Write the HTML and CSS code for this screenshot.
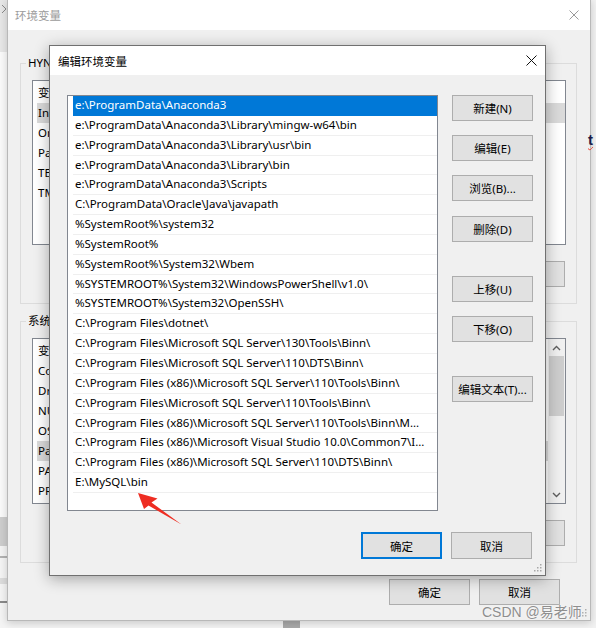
FILE: index.html
```html
<!DOCTYPE html>
<html lang="zh-CN">
<head>
<meta charset="utf-8">
<title>编辑环境变量</title>
<link rel="stylesheet" href="styles.css">
</head>
<body>
<div class="desk">
  <div class="side-left">
    <svg class="side-chev" width="6" height="10" viewBox="0 0 6 10"><path d="M1 1 L5 5 L1 9" fill="none" stroke="#8a8a8a" stroke-width="1"/></svg>
  </div>
  <div class="side-right"></div>
  <div class="shelf-bottom"></div>

  <div class="win bgwin">
    <div class="titlebar">
      <span class="title inactive">环境变量</span>
      <svg class="xbtn" width="10" height="10" viewBox="0 0 10 10"><path d="M0.5 0.5 L9.5 9.5 M9.5 0.5 L0.5 9.5" stroke="#9a9a9a" stroke-width="1"/></svg>
    </div>
    <div class="bgbody">
      <fieldset class="group">
        <legend>HYN 的用户变量(U)</legend>
        <div class="lv">
          <div class="lv-content">
            <div class="lv-head"><span class="col1">变量</span><span>值</span></div>
            <div class="lv-row sel">IntelliJ IDEA</div>
            <div class="lv-row">OneDrive</div>
            <div class="lv-row">Path</div>
            <div class="lv-row">TEMP</div>
            <div class="lv-row">TMP</div>
          </div>
        </div>
        <div class="btnrow">
          <button class="btn">新建(N)...</button>
          <button class="btn">编辑(E)...</button>
          <button class="btn">删除(D)</button>
        </div>
      </fieldset>
      <fieldset class="group group2">
        <legend>系统变量(S)</legend>
        <div class="lv lv2">
          <div class="lv-content">
            <div class="lv-head"><span class="col1">变量</span><span>值</span></div>
            <div class="lv-row">ComSpec</div>
            <div class="lv-row">DriverData</div>
            <div class="lv-row">NUMBER_OF_PROCESSORS</div>
            <div class="lv-row">OS</div>
            <div class="lv-row sel">Path</div>
            <div class="lv-row">PATHEXT</div>
            <div class="lv-row">PROCESSOR_ARCHITECTURE</div>
          </div>
          <div class="sb">
            <div class="sb-arrow"><svg width="9" height="6" viewBox="0 0 9 6"><path d="M1 5 L4.5 1.5 L8 5" fill="none" stroke="#5f5f5f" stroke-width="1.4"/></svg></div>
            <div class="sb-thumb"></div>
            <div class="sb-track"></div>
            <div class="sb-arrow"><svg width="9" height="6" viewBox="0 0 9 6"><path d="M1 1 L4.5 4.5 L8 1" fill="none" stroke="#5f5f5f" stroke-width="1.4"/></svg></div>
          </div>
        </div>
        <div class="btnrow">
          <button class="btn">新建(W)...</button>
          <button class="btn">编辑(I)...</button>
          <button class="btn">删除(L)</button>
        </div>
      </fieldset>
      <div class="bgfoot">
        <button class="btn">确定</button>
        <button class="btn">取消</button>
      </div>
    </div>
    <svg class="grip bggrip" width="8" height="8" viewBox="0 0 8 8"><g fill="#b0b0b0"><rect x="6" y="0" width="1.5" height="1.5"/><rect x="3" y="3" width="1.5" height="1.5"/><rect x="6" y="3" width="1.5" height="1.5"/><rect x="0" y="6" width="1.5" height="1.5"/><rect x="3" y="6" width="1.5" height="1.5"/><rect x="6" y="6" width="1.5" height="1.5"/></g></svg>
  </div>

  <div class="win dlg">
    <div class="titlebar dlg-title">
      <span class="title">编辑环境变量</span>
      <svg class="xbtn" width="11" height="11" viewBox="0 0 11 11"><path d="M0.5 0.5 L10.5 10.5 M10.5 0.5 L0.5 10.5" stroke="#111" stroke-width="1"/></svg>
    </div>
    <div class="dlg-body">
      <div class="dlg-main">
        <div class="plist">
          <div class="prow sel">e:\ProgramData\Anaconda3</div>
          <div class="prow">e:\ProgramData\Anaconda3\Library\mingw-w64\bin</div>
          <div class="prow">e:\ProgramData\Anaconda3\Library\usr\bin</div>
          <div class="prow">e:\ProgramData\Anaconda3\Library\bin</div>
          <div class="prow">e:\ProgramData\Anaconda3\Scripts</div>
          <div class="prow">C:\ProgramData\Oracle\Java\javapath</div>
          <div class="prow">%SystemRoot%\system32</div>
          <div class="prow">%SystemRoot%</div>
          <div class="prow">%SystemRoot%\System32\Wbem</div>
          <div class="prow">%SYSTEMROOT%\System32\WindowsPowerShell\v1.0\</div>
          <div class="prow">%SYSTEMROOT%\System32\OpenSSH\</div>
          <div class="prow">C:\Program Files\dotnet\</div>
          <div class="prow">C:\Program Files\Microsoft SQL Server\130\Tools\Binn\</div>
          <div class="prow">C:\Program Files\Microsoft SQL Server\110\DTS\Binn\</div>
          <div class="prow">C:\Program Files (x86)\Microsoft SQL Server\110\Tools\Binn\</div>
          <div class="prow">C:\Program Files\Microsoft SQL Server\110\Tools\Binn\</div>
          <div class="prow">C:\Program Files (x86)\Microsoft SQL Server\110\Tools\Binn\M...</div>
          <div class="prow">C:\Program Files (x86)\Microsoft Visual Studio 10.0\Common7\I...</div>
          <div class="prow">C:\Program Files (x86)\Microsoft SQL Server\110\DTS\Binn\</div>
          <div class="prow">E:\MySQL\bin</div>
        </div>
        <div class="side">
          <button class="btn">新建(N)</button>
          <button class="btn">编辑(E)</button>
          <button class="btn">浏览(B)...</button>
          <button class="btn">删除(D)</button>
          <button class="btn sep">上移(U)</button>
          <button class="btn">下移(O)</button>
          <button class="btn sep">编辑文本(T)...</button>
        </div>
      </div>
      <div class="dlg-foot">
        <button class="btn btn-default">确定</button>
        <button class="btn">取消</button>
      </div>
    </div>
    <svg class="grip dlggrip" width="8" height="8" viewBox="0 0 8 8"><g fill="#a8a8a8"><rect x="6" y="0" width="1.5" height="1.5"/><rect x="3" y="3" width="1.5" height="1.5"/><rect x="6" y="3" width="1.5" height="1.5"/><rect x="0" y="6" width="1.5" height="1.5"/><rect x="3" y="6" width="1.5" height="1.5"/><rect x="6" y="6" width="1.5" height="1.5"/></g></svg>
  </div>

  <svg class="arrow" width="48" height="38" viewBox="136 489 48 38"><polygon points="138,493 157.5,498.5 151.5,502.5 181.5,524.5 148.5,505.5 144,509" fill="#ee2d22"/></svg>

  <span class="peek-t">t</span>
  <div class="wm">CSDN @易老师</div>
</div>
</body>
</html>
```

FILE: styles.css
```css
* { box-sizing: border-box; }
html, body { margin: 0; padding: 0; }
body {
  width: 596px;
  height: 628px;
  overflow: hidden;
  background: #f4f4f4;
  font-family: "Noto Sans", "Noto Sans CJK SC", sans-serif;
  font-size: 11.5px;
  color: #000;
}
.desk { position: relative; width: 596px; height: 628px; }

.side-left {
  position: absolute; left: 0; top: 0; width: 8px; height: 628px;
  background: linear-gradient(to bottom,
    #e7e7e7 0 52px, #fafafa 52px 517px, #cdcdcd 517px 546px,
    #f4f4f4 546px 556px, #b2b2b2 556px 558px, #f4f4f4 558px 578px,
    #dcdcdc 578px 584px, #f4f4f4 584px 601px, #8a8a8a 601px 603px, #f4f4f4 603px);
}
.side-chev { display: block; margin: 4px 0 0 1px; }
.side-right { position: absolute; left: 590px; top: 0; width: 6px; height: 628px; background: #f2f2f2; }
.shelf-bottom { position: absolute; left: 283px; top: 621px; width: 17px; height: 7px; background: #a9a9a9; }

.win { position: absolute; display: flex; flex-direction: column; }
.titlebar {
  background: #fff;
  display: flex; align-items: center; justify-content: space-between;
  flex: none;
}
.title { font-size: 11.5px; }
.title.inactive { color: #9b9b9b; }
.xbtn { display: block; }

/* background window */
.bgwin {
  left: 7px; top: -1px; width: 584px; height: 622px;
  border: 1px solid #b8b8b8;
  background: #f0f0f0;
  box-shadow: 0 2px 8px rgba(0,0,0,0.18);
}
.bgwin .titlebar { height: 30px; padding: 0 11px 0 7px; }
.bgbody { flex: 1; padding: 25px 13px 0 12px; display: flex; flex-direction: column; }
.group {
  margin: 0; min-width: 0;
  border: 1px solid #dcdcdc;
  padding: 9px 10px 16px 11px;
}
.group legend { padding: 0 2px; margin-left: -6px; line-height: 16px; }
.group2 { margin-top: 9px; }
.lv {
  height: 165px; background: #fff; border: 1px solid #828790;
  display: flex; overflow: hidden;
}
.lv2 { height: 166px; }
.lv-content { flex: 1; min-width: 0; }
.lv-head { height: 22px; display: flex; align-items: center; padding-left: 5px; }
.lv-head .col1 { width: 150px; }
.lv-row { height: 20px; line-height: 20px; margin-left: 4px; padding-left: 1px; white-space: nowrap; }
.lv-row.sel { background: #dadada; }
.sb { width: 17px; background: #f0f0f0; display: flex; flex-direction: column; align-items: center; }
.sb-arrow { height: 17px; width: 17px; display: flex; align-items: center; justify-content: center; }
.sb-thumb { width: 15px; height: 60px; background: #cdcdcd; }
.sb-track { flex: 1; }
.btnrow { display: flex; justify-content: flex-end; gap: 9px; margin-top: 16px; padding-right: 1px; }
.bgfoot { display: flex; justify-content: flex-end; gap: 9px; margin-top: 16px; padding-right: 17px; }

.btn {
  width: 81px; height: 26px; padding: 0;
  background: #e1e1e1; border: 1px solid #adadad;
  font-family: inherit; font-size: 11.5px; color: #000;
  white-space: nowrap;
}
.grip { position: absolute; right: 3px; bottom: 3px; }

/* front dialog */
.dlg {
  left: 49px; top: 45px; width: 497px; height: 531px;
  border: 1px solid #707070;
  background: #f0f0f0;
  box-shadow: 0 3px 14px rgba(0,0,0,0.32);
}
.dlg-title { height: 29px; padding: 0 8px 0 8px; }
.dlg-body { flex: 1; padding: 20px 13px 16px 17px; display: flex; flex-direction: column; }
.dlg-main { display: flex; gap: 14px; }
.plist {
  width: 371px; height: 416px; flex: none;
  background: #fff; border: 1px solid #828790;
  padding-left: 5px; overflow: hidden;
}
.prow {
  height: 19.85px; line-height: 18.5px;
  padding-left: 2px;
  border-bottom: 1px solid #efefef;
  white-space: nowrap; overflow: hidden;
}
.prow.sel { background: #0078d7; color: #fff; border-bottom-color: #0078d7; }
.side { display: flex; flex-direction: column; gap: 14.2px; }
.side .sep { margin-top: 20px; }
.dlg-foot { margin-top: auto; display: flex; justify-content: flex-end; gap: 9px; }
.dlg-foot .btn { height: 27px; }
.btn-default { border: 2px solid #0078d7; }

.arrow { position: absolute; left: 136px; top: 489px; }
.peek-t {
  position: absolute; left: 588px; top: 131px;
  font-family: "Liberation Sans", sans-serif; font-size: 15px; font-weight: bold;
  color: #1b1b48; line-height: 18px;
  text-decoration: underline wavy #e8412f 1px;
}
.wm {
  position: absolute; left: 482px; top: 603px;
  font-family: "Liberation Sans", "Noto Sans CJK SC", sans-serif;
  font-size: 14px; line-height: 18px;
  color: #8e8e8e;
  text-shadow: 0 0 2px #fff;
  white-space: nowrap;
}
```
